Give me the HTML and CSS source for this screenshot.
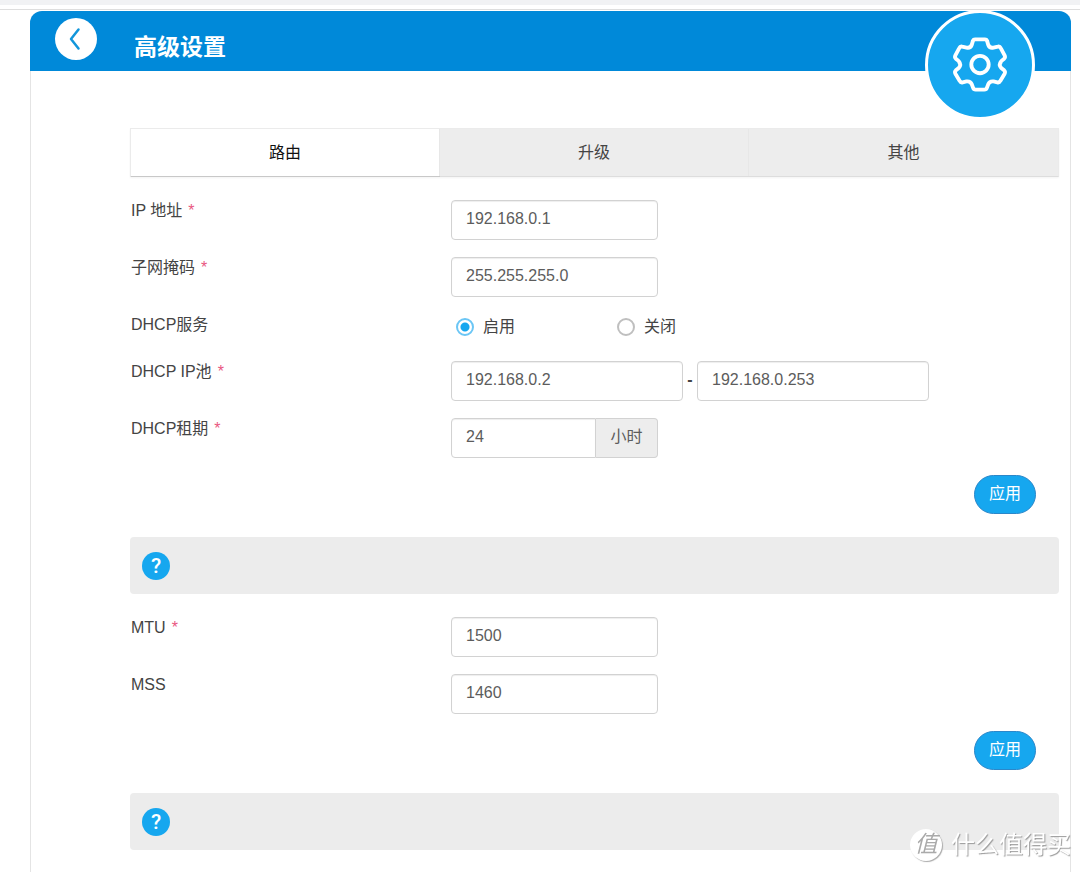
FILE: index.html
```html
<!DOCTYPE html>
<html lang="zh-CN">
<head>
<meta charset="utf-8">
<meta name="viewport" content="width=device-width, initial-scale=1">
<title>高级设置</title>
<link rel="stylesheet" href="styles.css">
</head>
<body>
<div class="topbar"></div>
<main class="panel">
  <header class="header">
    <button class="back" type="button" aria-label="返回">
      <svg width="42" height="42" viewBox="0 0 42 42" fill="none" stroke="#1296db" stroke-width="2.500" stroke-linecap="round" stroke-linejoin="round"><path d="M23.500 11.500L16 21L23.500 30.500"/></svg>
    </button>
    <h1 class="title">高级设置</h1>
    <div class="badge">
      <svg width="56" height="58" viewBox="-29 -29.500 58 60" fill="none" stroke="#fff" stroke-width="4" stroke-linejoin="round">
        <path d="M-5 -26H5Q7 -26 7.500 -24L8.500 -20.500Q10 -16.500 14 -17.500L18.500 -18.500Q20.500 -19 21.500 -17L25.500 -9.500Q26.500 -7.500 25 -6L22 -3.500Q19 0 22 3.500L25 6Q26.500 7.500 25.500 9.500L21 17Q20 19 18 18.500L14 17.500Q10 17 8.500 20.500L7 24.500Q6.500 26 4.500 26H-4.500Q-6.500 26 -7 24.500L-8.500 20.500Q-10 17 -14 17.500L-18 18.500Q-20 19 -21 17L-25.500 9.500Q-26.500 7.500 -25 6L-22 3.500Q-19 0 -22 -3.500L-25 -6Q-26.500 -7.500 -25.500 -9.500L-21.500 -17Q-20.500 -19 -18.500 -18.500L-14 -17.500Q-10 -16.500 -8.500 -20.500L-7.500 -24Q-7 -26 -5 -26Z"/>
        <circle r="9"/>
      </svg>
    </div>
  </header>

  <div class="content">
    <nav class="tabs">
      <button class="tab active" type="button">路由</button>
      <button class="tab" type="button">升级</button>
      <button class="tab" type="button">其他</button>
    </nav>

    <form class="form">
      <div class="row">
        <label class="label" for="ip">IP 地址<span class="star">*</span></label>
        <input class="input" id="ip" type="text" value="192.168.0.1">
      </div>
      <div class="row">
        <label class="label" for="mask">子网掩码<span class="star">*</span></label>
        <input class="input" id="mask" type="text" value="255.255.255.0">
      </div>
      <div class="row choice" role="radiogroup" aria-labelledby="dhcp">
        <span class="label" id="dhcp">DHCP服务</span>
        <div class="options">
          <label class="option"><input class="radio" type="radio" name="dhcp" checked>启用</label>
          <label class="option"><input class="radio" type="radio" name="dhcp">关闭</label>
        </div>
      </div>
      <div class="row">
        <label class="label" for="pool">DHCP IP池<span class="star">*</span></label>
        <div class="range">
          <input class="input wide" id="pool" type="text" value="192.168.0.2">
          <span class="dash">-</span>
          <input class="input wide" type="text" value="192.168.0.253" aria-label="DHCP IP池结束地址">
        </div>
      </div>
      <div class="row">
        <label class="label" for="lease">DHCP租期<span class="star">*</span></label>
        <div class="group">
          <input class="input" id="lease" type="text" value="24">
          <span class="unit">小时</span>
        </div>
      </div>
      <div class="actions"><button class="apply" type="button">应用</button></div>
    </form>

    <div class="help"><button class="help-icon" type="button">?</button></div>

    <form class="form">
      <div class="row">
        <label class="label" for="mtu">MTU<span class="star">*</span></label>
        <input class="input" id="mtu" type="text" value="1500">
      </div>
      <div class="row">
        <label class="label" for="mss">MSS</label>
        <input class="input" id="mss" type="text" value="1460">
      </div>
      <div class="actions"><button class="apply" type="button">应用</button></div>
    </form>

    <div class="help"><button class="help-icon" type="button">?</button></div>
  </div>
</main>
<div class="watermark"><span class="mark">值</span><span>什么值得买</span></div>
</body>
</html>
```

FILE: styles.css
```css
* { box-sizing: border-box; }

body {
  margin: 0;
  min-height: 100vh;
  display: flex;
  flex-direction: column;
  background: #fff;
  color: #444;
  font: 16px/22px "Liberation Sans", "Noto Sans CJK SC", sans-serif;
}

button, input { font: inherit; }

.topbar {
  height: 10px;
  margin-bottom: 1px;
  border-bottom: 1px solid #dedede;
  background: linear-gradient(#f1f2f4 5px, #fff 5px);
}

.panel {
  flex: 1;
  margin: 0 9px 0 30px;
  border: solid #e4e4e4;
  border-width: 0 1px;
  border-radius: 12px 12px 0 0;
}

.header {
  position: relative;
  display: flex;
  height: 60px;
  margin: 0 -1px;
  padding: 7px 25px;
  gap: 37px;
  border-radius: 12px 12px 0 0;
  background: #0089d9;
}

.back {
  width: 42px;
  height: 42px;
  padding: 0;
  border: 0;
  border-radius: 50%;
  background: #fff;
}

.back svg { display: block; }

.title {
  margin: 0;
  padding-top: 12px;
  color: #fff;
  font-size: 23px;
  line-height: 34px;
  font-weight: 700;
}

.badge {
  position: absolute;
  top: -1px;
  right: 36px;
  display: flex;
  align-items: center;
  justify-content: center;
  width: 110px;
  height: 110px;
  border: 3px solid #fff;
  border-radius: 50%;
  background: #16a7ef;
}

.content {
  display: flex;
  flex-direction: column;
  gap: 23px;
  padding: 57px 11px 22px 99px;
}

.tabs {
  display: grid;
  grid-template-columns: repeat(3, 1fr);
  height: 49px;
  border: 1px solid #ebebeb;
  border-bottom-color: #ddd;
  box-shadow: 0 1px 2px #0000000d;
}

.tab {
  padding: 0;
  border: 0;
  border-right: 1px solid #e7e7e7;
  background: #ededed;
  color: #444;
}

.tab:last-child { border-right: 0; }

.tab.active {
  background: #fff;
  color: #111;
  box-shadow: 0 1px #c8c8c8;
}

.form {
  display: flex;
  flex-direction: column;
  gap: 17px;
}

.row {
  display: grid;
  grid-template-columns: 321px 1fr;
  align-items: start;
}

.label { padding-left: 1px; }

.choice { min-height: 30px; }

.star {
  margin-left: 6px;
  color: #e9577f;
}

.input {
  width: 207px;
  height: 40px;
  padding: 0 14px 2px;
  border: 1px solid #d2d2d2;
  border-radius: 4px;
  background: #fff;
  color: #5c5c5c;
  box-shadow: inset 0 1px 1px #00000012;
}

.wide { width: 232px; }

.options { display: flex; }

.option {
  display: flex;
  align-items: center;
  gap: 9px;
  width: 161px;
  padding-left: 5px;
  line-height: 26px;
}

.radio {
  appearance: none;
  width: 18px;
  height: 18px;
  margin: 0;
  border: 2px solid #bfbfbf;
  border-radius: 50%;
  background: #fff;
}

.radio:checked {
  border-color: #6bc6f5;
  background: radial-gradient(circle, #16a7ef 4px, #fff 5px);
}

.range, .group { display: flex; }

.dash {
  width: 14px;
  line-height: 38px;
  text-align: center;
  font-weight: 700;
}

.group .input {
  width: 145px;
  border-radius: 4px 0 0 4px;
}

.unit {
  width: 62px;
  height: 40px;
  border: 1px solid #d2d2d2;
  border-left: 0;
  border-radius: 0 4px 4px 0;
  background: #ededed;
  color: #5c5c5c;
  line-height: 36px;
  text-align: center;
}

.actions {
  display: flex;
  justify-content: flex-end;
  padding-right: 23px;
}

.apply {
  width: 62px;
  height: 39px;
  padding: 0 0 2px;
  border: 1px solid #2b87c9;
  border-radius: 20px;
  background: #16a7ef;
  color: #fff;
}

.help {
  display: flex;
  align-items: center;
  height: 57px;
  padding: 0 12px;
  border-radius: 4px;
  background: #ececec;
}

.help-icon {
  width: 28px;
  height: 28px;
  padding: 0;
  border: 0;
  border-radius: 50%;
  background: #16a7ef;
  color: #fff;
  font: 500 21px/28px Roboto, sans-serif;
}

.watermark {
  position: fixed;
  right: 9px;
  bottom: 11px;
  display: flex;
  align-items: center;
  gap: 9px;
  color: #fff;
  font-size: 24px;
  line-height: 32px;
  text-shadow: 1px 1px 1px #999;
  pointer-events: none;
}

.mark {
  width: 32px;
  height: 32px;
  border-radius: 50%;
  background: #fff;
  color: #aaa;
  font-size: 23px;
  font-style: italic;
  line-height: 30px;
  text-align: center;
  text-shadow: none;
  box-shadow: 1px 1px 1px #aaa;
}
```
